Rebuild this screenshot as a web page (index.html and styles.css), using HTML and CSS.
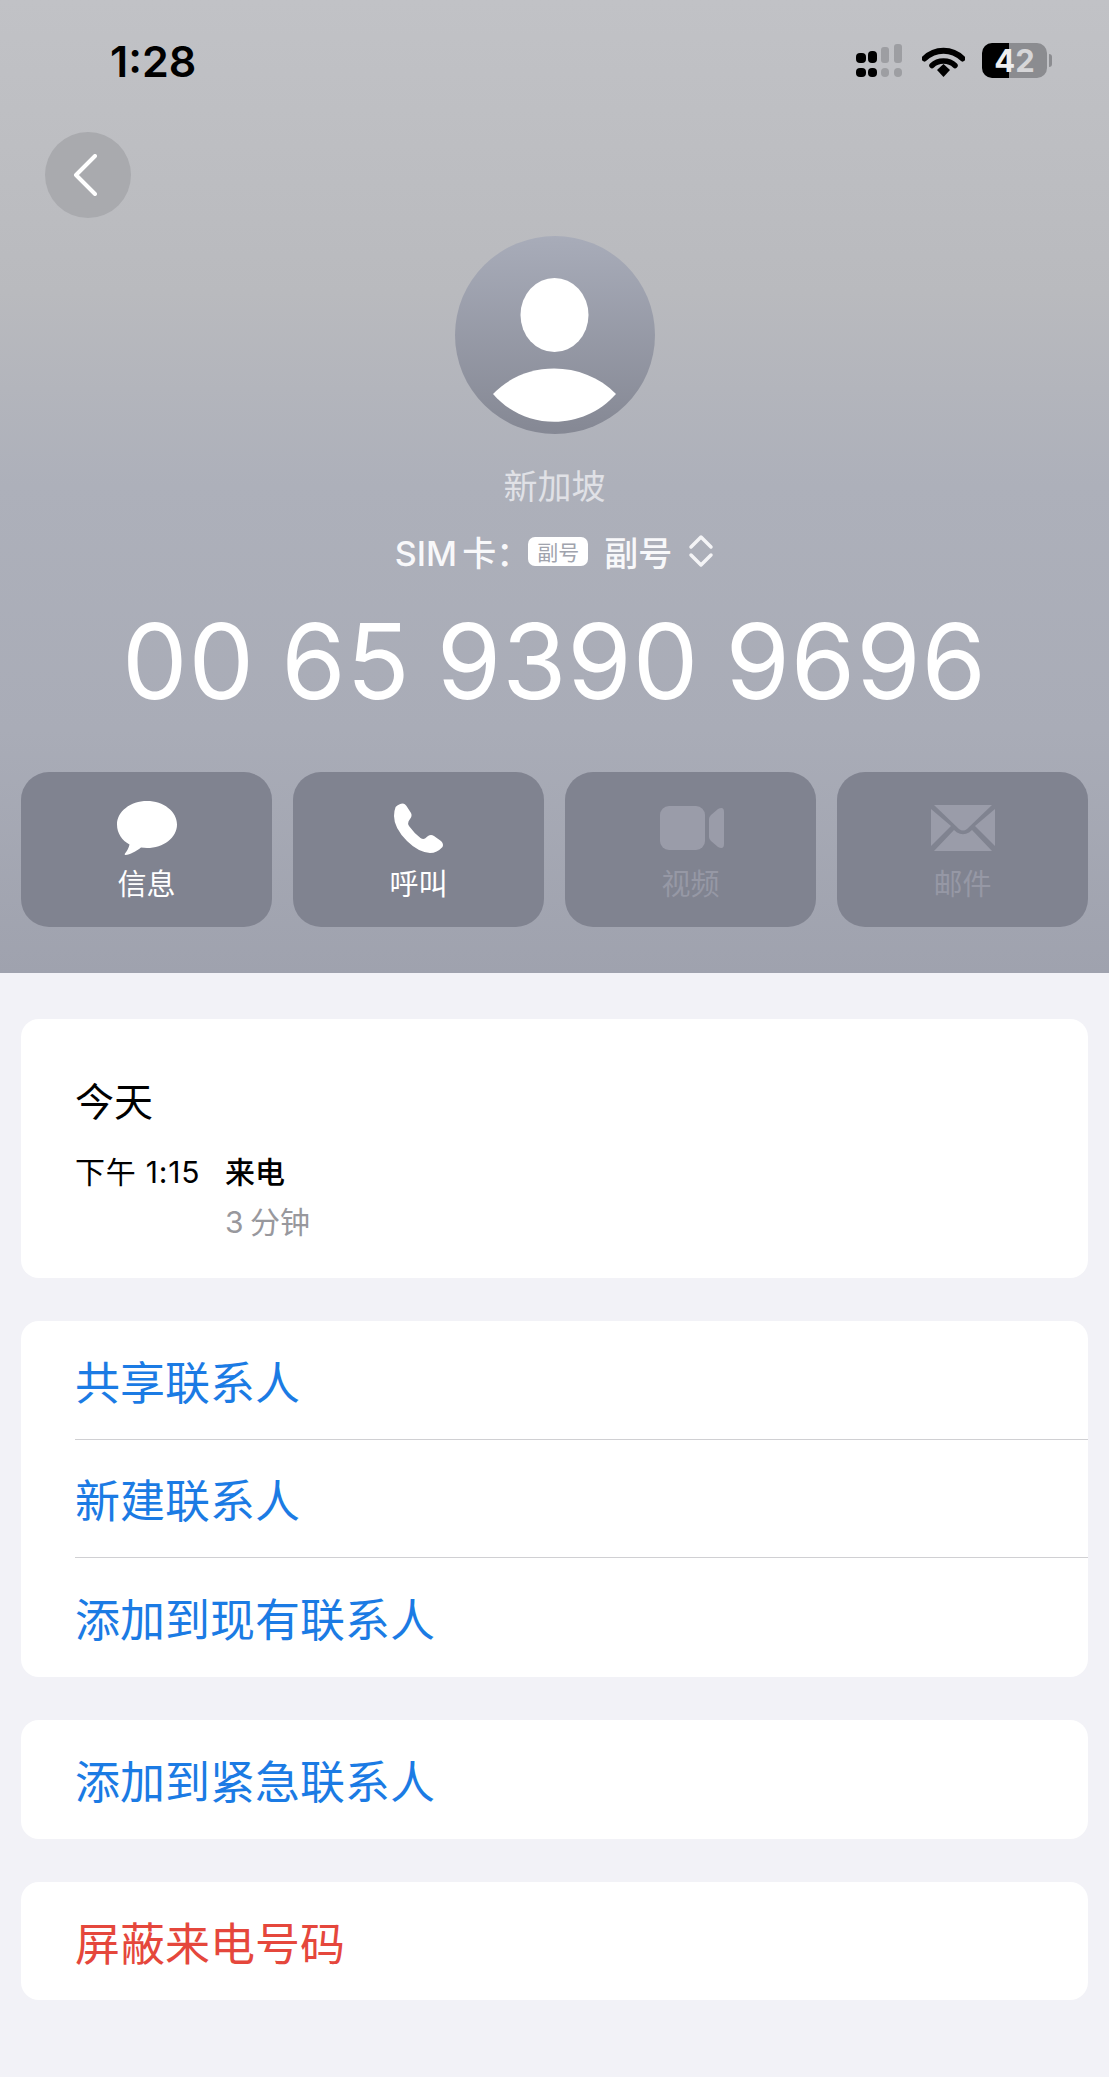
FILE: index.html
```html
<!DOCTYPE html>
<html lang="zh">
<head>
    <meta charset="utf-8">
    <meta name="viewport" content="width=device-width, initial-scale=1.0">
    <link rel="stylesheet" href="styles.css">
</head>
<body>
    <header class="top">
        <div class="status">
            <span class="clock">1:28</span>
            <div class="status-icons">
                <svg class="signal" width="46" height="33" viewBox="0 0 46 33">
                    <rect x="0" y="9" width="10" height="10" rx="4" fill="#000"/>
                    <rect x="12" y="7" width="9" height="12" rx="4" fill="#000"/>
                    <rect x="25" y="3" width="8" height="16" rx="3" fill="#9d9ea2"/>
                    <rect x="38" y="0" width="8" height="19" rx="3" fill="#9d9ea2"/>
                    <rect x="0" y="24" width="10" height="9" rx="4" fill="#000"/>
                    <rect x="12" y="24" width="9" height="9" rx="4" fill="#000"/>
                    <rect x="25" y="24" width="8" height="9" rx="4" fill="#9d9ea2"/>
                    <rect x="38" y="24" width="8" height="9" rx="4" fill="#9d9ea2"/>
                </svg>
                <svg class="wifi" width="43" height="32" viewBox="0 0 43 32">
                    <path d="M2.500 13.500C13 3 30 3 40.500 13.500" fill="none" stroke="#000" stroke-width="6" stroke-linecap="round"/>
                    <path d="M10 20.500C16 14.500 27 14.500 33 20.500" fill="none" stroke="#000" stroke-width="5.500" stroke-linecap="round"/>
                    <path d="M15 25L21.500 19L28 25L21.500 32Z" fill="#000"/>
                </svg>
                <div class="battery"><span>4</span><span class="battery-rest">2</span></div>
                <div class="battery-cap"></div>
            </div>
        </div>

        <div class="back">
            <svg width="24" height="42" viewBox="0 0 24 42">
                <path d="M22 2L3 21L22 40" fill="none" stroke="#fff" stroke-width="4" stroke-linecap="round" stroke-linejoin="round"/>
            </svg>
        </div>

        <svg class="avatar" width="200" height="198" viewBox="0 0 200 198">
            <defs>
                <linearGradient id="avatarFill" x1="0" y1="0" x2="0" y2="1">
                    <stop offset="0" stop-color="#a8acb9"/>
                    <stop offset="1" stop-color="#858894"/>
                </linearGradient>
            </defs>
            <ellipse cx="100" cy="99" rx="100" ry="99" fill="url(#avatarFill)"/>
            <ellipse cx="99.500" cy="79" rx="34" ry="37" fill="#fff"/>
            <path d="M38 158C70 124 128 124 161 158C128 195 70 195 38 158Z" fill="#fff"/>
        </svg>

        <div class="name">新加坡</div>

        <div class="sim">
            <span class="sim-label">SIM 卡：</span>
            <span class="sim-badge">副号</span>
            <span class="sim-name">副号</span>
            <svg width="26" height="34" viewBox="0 0 26 34">
                <path d="M3 13L13 3L23 13M3 21L13 31L23 21" fill="none" stroke="#f4f4f6" stroke-width="3.500" stroke-linecap="round" stroke-linejoin="round"/>
            </svg>
        </div>

        <div class="number">00 65 9390 9696</div>

        <div class="actions">
            <div class="action">
                <svg class="action-icon" width="60" height="54" viewBox="0 0 60 54">
                    <path d="M30 0C46.500 0 60 10.500 60 23.500C60 36.500 46.500 47 30 47C28 47 26 46.800 24 46.500C19 50.500 13 53.500 8.500 54C7.500 54 7.500 53 8 52.500C10 50 12 46.500 12.500 43.500C5 39.500 0 32 0 23.500C0 10.500 13.500 0 30 0Z" fill="#fff"/>
                </svg>
                <span>信息</span>
            </div>
            <div class="action">
                <svg class="action-icon" width="50" height="54" viewBox="0 0 50 50">
                    <path d="M1.600 4Q5 .5 9 .5Q11 .5 12.500 3L17 10Q18.500 13 16 16L14.500 18.500Q13.500 20.500 15 23Q20 30 26.500 35Q29 36.500 31 35.500L34 33Q37 31 40 33L47 38Q50 41 48.500 44Q43 50 36 50Q24 49 13 38Q0 25 0 13Q0 8 1.600 4Z" fill="#fff"/>
                </svg>
                <span>呼叫</span>
            </div>
            <div class="action is-off">
                <svg class="action-icon video-icon" width="64" height="54" viewBox="0 0 64 54">
                    <rect x="0" y="5" width="45" height="44" rx="9" fill="#9a9ca9"/>
                    <path d="M49 18Q49 16 51 14L58 8Q64 5 64 11V43Q64 49 58 46L51 40Q49 38 49 36Z" fill="#9a9ca9"/>
                </svg>
                <span>视频</span>
            </div>
            <div class="action is-off">
                <svg class="action-icon" width="64" height="54" viewBox="0 0 64 46">
                    <path d="M3 0H61L36 24Q32 27 28 24Z" fill="#9a9ca9"/>
                    <path d="M0 4V41L20 21Z" fill="#9a9ca9"/>
                    <path d="M64 4V41L44 21Z" fill="#9a9ca9"/>
                    <path d="M3 46L23 25L26 27.500Q32 31 38 27.500L41 25L61 46Z" fill="#9a9ca9"/>
                </svg>
                <span>邮件</span>
            </div>
        </div>
    </header>

    <main class="list">
        <section class="card recent">
            <div class="recent-day">今天</div>
            <div class="recent-row">
                <div class="recent-time">下午 1:15</div>
                <div>
                    <div class="recent-type">来电</div>
                    <div class="recent-length">3 分钟</div>
                </div>
            </div>
        </section>

        <section class="card">
            <div class="row">共享联系人</div>
            <div class="row">新建联系人</div>
            <div class="row">添加到现有联系人</div>
        </section>

        <section class="card">
            <div class="row">添加到紧急联系人</div>
        </section>

        <section class="card">
            <div class="row is-danger">屏蔽来电号码</div>
        </section>
    </main>
</body>
</html>
```

FILE: styles.css
```css
* {
    box-sizing: border-box;
}

body {
    margin: 0;
    height: 2077px;
    overflow: hidden;
    background-color: #f2f2f7;
    font-family: Inter, "Noto Sans CJK SC", sans-serif;
}

.top {
    height: 973px;
    padding: 43px 21px 0;
    display: flex;
    flex-direction: column;
    background: linear-gradient(180deg, #c1c2c6 0%, #b9babe 30%, #adb0ba 50%, #a9acb7 75%, #9fa2ae 100%);
}

.status {
    height: 35px;
    display: flex;
    justify-content: space-between;
    align-items: center;
    padding-left: 89px;
    padding-right: 36px;
}

.clock {
    font-size: 43px;
    font-weight: 600;
    color: #000;
}

.status-icons {
    display: flex;
    align-items: center;
}

.signal {
    margin-right: 20px;
}

.wifi {
    margin-right: 17px;
}

.battery {
    width: 65px;
    height: 35px;
    border-radius: 10px;
    display: flex;
    justify-content: center;
    align-items: center;
    font-size: 31px;
    font-weight: 700;
    color: #eeeeef;
    background: linear-gradient(90deg, #000 0 27px, #8b8c90 27px);
}

.battery-rest {
    color: #d6d6d8;
}

.battery-cap {
    width: 3px;
    height: 13px;
    margin-left: 2px;
    border-radius: 0 4px 4px 0;
    background-color: #8b8c90;
}

.back {
    width: 86px;
    height: 86px;
    margin: 54px 0 0 24px;
    border-radius: 50%;
    display: flex;
    align-items: center;
    justify-content: center;
    padding-right: 6px;
    background-color: #a9aaae;
}

.avatar {
    align-self: center;
    margin-top: 18px;
    flex-shrink: 0;
}

.name {
    margin-top: 30px;
    text-align: center;
    font-size: 34px;
    line-height: 46px;
    color: #e0e1e6;
}

.sim {
    margin-top: 18px;
    height: 46px;
    display: flex;
    justify-content: center;
    align-items: center;
    font-size: 34px;
    font-weight: 500;
    color: #f8f8fa;
}

.sim-label {
    word-spacing: -4px;
}

.sim-badge {
    width: 60px;
    height: 29px;
    margin-left: -2px;
    border-radius: 7px;
    display: flex;
    align-items: center;
    justify-content: center;
    font-size: 21px;
    font-weight: 400;
    color: #a0a3ad;
    background-color: #fff;
}

.sim-name {
    margin: 0 16px;
}

.number {
    margin-top: 25px;
    text-align: center;
    font-size: 104px;
    line-height: 124px;
    font-weight: 400;
    letter-spacing: 0.900px;
    word-spacing: -4px;
    color: #fff;
    white-space: nowrap;
}

.actions {
    margin-top: 49px;
    display: grid;
    grid-template-columns: repeat(4, 1fr);
    column-gap: 21px;
}

.action {
    height: 155px;
    padding-top: 29px;
    border-radius: 28px;
    display: flex;
    flex-direction: column;
    align-items: center;
    font-size: 29px;
    line-height: 40px;
    color: #fff;
    background-color: #808390;
}

.action-icon {
    flex-shrink: 0;
    margin-bottom: 10px;
}

.video-icon {
    margin-left: 3px;
}

.is-off {
    color: #9698a5;
}

.list {
    padding: 46px 21px 0;
    display: flex;
    flex-direction: column;
    gap: 43.250px;
}

.card {
    background-color: #fff;
    border-radius: 18px;
}

.recent {
    height: 259px;
    padding: 60px 54px 0;
}

.recent-day {
    font-size: 39px;
    line-height: 46px;
    color: #000;
}

.recent-row {
    margin-top: 24px;
    display: flex;
    font-size: 30px;
    line-height: 50px;
    color: #000;
}

.recent-time {
    width: 150px;
    line-height: 46px;
    letter-spacing: 0.800px;
    white-space: nowrap;
}

.recent-type {
    line-height: 46px;
    font-weight: 500;
}

.recent-length {
    margin-top: 4px;
    line-height: 46px;
    word-spacing: -2px;
    color: #98989d;
}

.row {
    height: 118.500px;
    margin-left: 54px;
    display: flex;
    align-items: center;
    font-size: 45px;
    color: #1b7be4;
    border-bottom: 1px solid #d0d0d3;
}

.row:last-child {
    border-bottom: none;
}

.is-danger {
    color: #e5473c;
}
```
